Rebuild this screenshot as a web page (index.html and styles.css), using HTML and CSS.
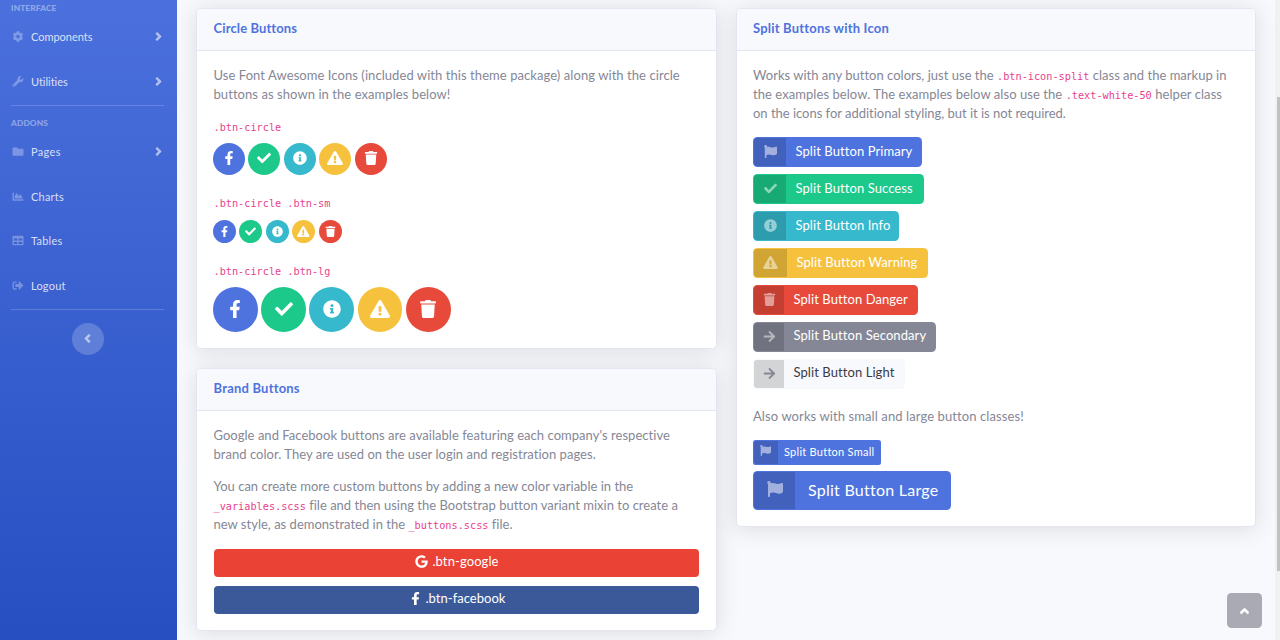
FILE: index.html
```html
<!DOCTYPE html>
<html lang="en">
<head>
<meta charset="utf-8">
<title>Buttons</title>
<link rel="stylesheet" href="styles.css">
</head>
<body>
<svg class="sprite" aria-hidden="true">
<symbol id="fb" viewBox="0 0 320 512"><path d="M279.14 288l14.22-92.66h-88.91v-60.13c0-25.35 12.42-50.06 52.24-50.06h40.42V6.26S260.43 0 225.36 0c-73.22 0-121.08 44.38-121.08 124.72v70.62H22.89V288h81.39v224h100.17V288z"/></symbol>
<symbol id="check" viewBox="0 0 512 512"><path d="M173.898 439.404l-166.4-166.4c-9.997-9.997-9.997-26.206 0-36.204l36.203-36.204c9.997-9.998 26.207-9.998 36.204 0L192 312.69 432.095 72.596c9.997-9.997 26.207-9.997 36.204 0l36.203 36.204c9.997 9.997 9.997 26.206 0 36.204l-294.4 294.401c-9.998 9.997-26.207 9.997-36.204-.001z"/></symbol>
<symbol id="info" viewBox="0 0 512 512"><path d="M256 8C119.043 8 8 119.083 8 256c0 136.997 111.043 248 248 248s248-111.003 248-248C504 119.083 392.957 8 256 8zm0 110c23.196 0 42 18.804 42 42s-18.804 42-42 42-42-18.804-42-42 18.804-42 42-42zm56 254c0 6.627-5.373 12-12 12h-88c-6.627 0-12-5.373-12-12v-24c0-6.627 5.373-12 12-12h12v-64h-12c-6.627 0-12-5.373-12-12v-24c0-6.627 5.373-12 12-12h64c6.627 0 12 5.373 12 12v100h12c6.627 0 12 5.373 12 12v24z"/></symbol>
<symbol id="warn" viewBox="0 0 576 512"><path d="M569.517 440.013C587.975 472.007 564.806 512 527.94 512H48.054c-36.937 0-59.999-40.055-41.577-71.987L246.423 23.985c18.467-32.009 64.72-31.951 83.154 0l239.94 416.028zM288 354c-25.405 0-46 20.595-46 46s20.595 46 46 46 46-20.595 46-46-20.595-46-46-46zm-43.673-165.346l7.418 136c.347 6.364 5.609 11.346 11.982 11.346h48.546c6.373 0 11.635-4.982 11.982-11.346l7.418-136c.375-6.874-5.098-12.654-11.982-12.654h-63.383c-6.884 0-12.356 5.78-11.981 12.654z"/></symbol>
<symbol id="trash" viewBox="0 0 448 512"><path d="M432 32H312l-9.4-18.7A24 24 0 0 0 281.1 0H166.8a23.72 23.72 0 0 0-21.4 13.3L136 32H16A16 16 0 0 0 0 48v32a16 16 0 0 0 16 16h416a16 16 0 0 0 16-16V48a16 16 0 0 0-16-16zM32 128l21.2 339a48 48 0 0 0 47.9 45h245.8a48 48 0 0 0 47.9-45L416 128z"/></symbol>
<symbol id="flag" viewBox="0 0 512 512"><path d="M349.565 98.783C295.978 98.783 251.721 64 184.348 64c-24.955 0-47.309 4.384-68.045 12.013a55.947 55.947 0 0 0 3.586-23.562C118.117 24.015 94.806 1.206 66.338.048 34.345-1.254 8 24.296 8 56c0 19.026 9.497 35.825 24 45.945V488c0 13.255 10.745 24 24 24h16c13.255 0 24-10.745 24-24v-94.4c28.311-12.064 63.582-22.122 114.435-22.122 53.588 0 97.844 34.783 165.217 34.783 48.169 0 86.667-16.294 122.505-40.858C506.84 359.452 512 349.571 512 339.045v-243.1c0-23.393-24.269-38.87-45.485-29.016-34.338 15.948-76.454 31.854-116.95 31.854z"/></symbol>
<symbol id="arrow" viewBox="0 0 448 512"><path d="M190.5 66.9l22.2-22.2c9.4-9.4 24.6-9.4 33.9 0L441 239c9.4 9.4 9.4 24.6 0 33.9L246.6 467.3c-9.4 9.4-24.6 9.4-33.9 0l-22.2-22.2c-9.5-9.5-9.3-25 .4-34.3L311.4 296H24c-13.3 0-24-10.7-24-24v-32c0-13.3 10.7-24 24-24h287.4L190.9 101.2c-9.8-9.3-10-24.8-.4-34.3z"/></symbol>
<symbol id="google" viewBox="0 0 488 512"><path d="M488 261.8C488 403.3 391.1 504 248 504 110.8 504 0 393.2 0 256S110.8 8 248 8c66.8 0 123 24.5 166.3 64.9l-67.5 64.9C258.5 52.6 94.3 116.6 94.3 256c0 86.5 69.1 156.6 153.7 156.6 98.2 0 135-70.4 140.8-106.9H248v-85.3h236.1c2.3 12.7 3.9 24.9 3.9 41.4z"/></symbol>
<symbol id="cog" viewBox="0 0 512 512"><path d="M487.4 315.7l-42.6-24.6c4.3-23.2 4.3-47 0-70.2l42.6-24.6c4.9-2.8 7.1-8.6 5.5-14-11.1-35.6-30-67.8-54.7-94.6-3.8-4.1-10-5.1-14.8-2.3L380.8 110c-17.9-15.4-38.5-27.3-60.8-35.1V25.8c0-5.6-3.9-10.5-9.4-11.7-36.7-8.2-74.3-7.8-109.2 0-5.5 1.2-9.4 6.1-9.4 11.7V75c-22.2 7.9-42.8 19.8-60.8 35.1L88.7 85.5c-4.9-2.8-11-1.9-14.8 2.3-24.7 26.7-43.6 58.9-54.7 94.6-1.7 5.4.6 11.2 5.5 14L67.3 221c-4.3 23.2-4.3 47 0 70.2l-42.6 24.6c-4.9 2.8-7.1 8.6-5.5 14 11.1 35.6 30 67.8 54.7 94.6 3.8 4.1 10 5.1 14.8 2.3l42.6-24.6c17.9 15.4 38.5 27.3 60.8 35.1v49.2c0 5.6 3.9 10.5 9.4 11.7 36.7 8.2 74.3 7.8 109.2 0 5.5-1.2 9.4-6.1 9.4-11.7v-49.2c22.2-7.9 42.8-19.8 60.8-35.1l42.6 24.6c4.9 2.8 11 1.9 14.8-2.3 24.7-26.7 43.6-58.9 54.7-94.6 1.5-5.5-.7-11.3-5.6-14.1zM256 336c-44.1 0-80-35.9-80-80s35.9-80 80-80 80 35.9 80 80-35.9 80-80 80z"/></symbol>
<symbol id="wrench" viewBox="0 0 512 512"><path d="M507.73 109.1c-2.24-9.03-13.54-12.09-20.12-5.51l-74.36 74.36-67.88-11.31-11.31-67.88 74.36-74.36c6.62-6.62 3.43-17.9-5.66-20.16-47.38-11.74-99.55.91-136.58 37.93-39.64 39.64-50.55 97.1-34.05 147.2L18.74 402.76c-24.99 24.99-24.99 65.51 0 90.5 24.99 24.99 65.51 24.99 90.5 0l213.21-213.21c50.12 16.71 107.47 5.68 147.37-34.22 37.07-37.07 49.7-89.32 37.91-136.73zM64 472c-13.25 0-24-10.75-24-24 0-13.26 10.75-24 24-24s24 10.74 24 24c0 13.25-10.75 24-24 24z"/></symbol>
<symbol id="folder" viewBox="0 0 512 512"><path d="M464 128H272l-64-64H48C21.49 64 0 85.49 0 112v288c0 26.51 21.49 48 48 48h416c26.51 0 48-21.49 48-48V176c0-26.51-21.49-48-48-48z"/></symbol>
<symbol id="chart" viewBox="0 0 512 512"><path d="M500 384c6.6 0 12 5.4 12 12v40c0 6.6-5.4 12-12 12H12c-6.6 0-12-5.4-12-12V76c0-6.6 5.4-12 12-12h40c6.6 0 12 5.4 12 12v308h436zM372.7 159.5L288 216l-85.3-113.7c-5.1-6.8-15.5-6.3-19.9 1L96 248v104h384l-89.9-187.8c-3.2-6.5-11.4-8.7-17.4-4.7z"/></symbol>
<symbol id="table" viewBox="0 0 512 512"><path d="M464 32H48C21.49 32 0 53.49 0 80v352c0 26.51 21.49 48 48 48h416c26.51 0 48-21.49 48-48V80c0-26.51-21.49-48-48-48zM224 416H64v-96h160v96zm0-160H64v-96h160v96zm224 160H288v-96h160v96zm0-160H288v-96h160v96z"/></symbol>
<symbol id="signout" viewBox="0 0 512 512"><path d="M497 273L329 441c-15 15-41 4.5-41-17v-96H152c-13.3 0-24-10.7-24-24v-96c0-13.3 10.7-24 24-24h136V88c0-21.4 25.9-32 41-17l168 168c9.3 9.4 9.3 24.6 0 34zM192 436v-40c0-6.6-5.4-12-12-12H96c-17.7 0-32-14.3-32-32V160c0-17.7 14.3-32 32-32h84c6.6 0 12-5.4 12-12V76c0-6.6-5.4-12-12-12H96c-53 0-96 43-96 96v192c0 53 43 96 96 96h84c6.6 0 12-5.4 12-12z"/></symbol>
<symbol id="right" viewBox="0 0 256 512"><path d="M224.3 273l-136 136c-9.4 9.4-24.6 9.4-33.9 0l-22.6-22.6c-9.4-9.4-9.4-24.6 0-33.9l96.4-96.4-96.4-96.4c-9.4-9.4-9.4-24.6 0-33.9L54.3 103c9.4-9.4 24.6-9.4 33.9 0l136 136c9.5 9.4 9.5 24.6.1 34z"/></symbol>
<symbol id="left" viewBox="0 0 256 512"><path d="M31.7 239l136-136c9.4-9.4 24.6-9.4 33.9 0l22.6 22.6c9.4 9.4 9.4 24.6 0 33.9L127.9 256l96.4 96.4c9.4 9.4 9.4 24.6 0 33.9L201.7 409c-9.4 9.4-24.6 9.4-33.9 0l-136-136c-9.5-9.4-9.5-24.6-.1-34z"/></symbol>
<symbol id="up" viewBox="0 0 320 512"><path d="M177 159.7l136 136c9.4 9.4 9.4 24.6 0 33.9l-22.6 22.6c-9.4 9.4-24.6 9.4-33.9 0L160 255.9l-96.4 96.4c-9.4 9.4-24.6 9.4-33.9 0L7 329.7c-9.4-9.4-9.4-24.6 0-33.9l136-136c9.4-9.5 24.6-9.5 34-.1z"/></symbol>
</svg>
<div class="wrapper">
<nav class="sidebar">
  <div class="heading">INTERFACE</div>
  <a class="nav-item"><svg class="nav-icon"><use href="#cog"/></svg><span class="sp-0">Components</span><svg class="caret"><use href="#right"/></svg></a>
  <a class="nav-item"><svg class="nav-icon"><use href="#wrench"/></svg><span class="sp-0">Utilities</span><svg class="caret"><use href="#right"/></svg></a>
  <hr class="divider">
  <div class="heading addons">ADDONS</div>
  <a class="nav-item"><svg class="nav-icon"><use href="#folder"/></svg><span class="sp-4">Pages</span><svg class="caret"><use href="#right"/></svg></a>
  <a class="nav-item"><svg class="nav-icon"><use href="#chart"/></svg><span class="sp-2">Charts</span></a>
  <a class="nav-item tables"><svg class="nav-icon"><use href="#table"/></svg><span class="sp-3">Tables</span></a>
  <a class="nav-item"><svg class="nav-icon"><use href="#signout"/></svg><span class="sp-2">Logout</span></a>
  <hr class="divider last">
  <button class="toggle"><svg><use href="#left"/></svg></button>
</nav>
<main class="content">
  <div class="column first">
    <section class="card">
      <h6 class="card-header sp-1">Circle Buttons</h6>
      <div class="card-body">
        <p class="intro">Use Font Awesome Icons (included with this theme package) along with the circle<br>buttons as shown in the examples below!</p>
        <div class="label"><code>.btn-circle</code></div>
        <div class="circles">
          <a class="circle primary"><svg><use href="#fb"/></svg></a><a class="circle success"><svg><use href="#check"/></svg></a><a class="circle info"><svg><use href="#info"/></svg></a><a class="circle warning"><svg class="wide"><use href="#warn"/></svg></a><a class="circle danger"><svg><use href="#trash"/></svg></a>
        </div>
        <div class="label"><code>.btn-circle .btn-sm</code></div>
        <div class="circles small">
          <a class="circle primary"><svg><use href="#fb"/></svg></a><a class="circle success"><svg><use href="#check"/></svg></a><a class="circle info"><svg><use href="#info"/></svg></a><a class="circle warning"><svg class="wide"><use href="#warn"/></svg></a><a class="circle danger"><svg><use href="#trash"/></svg></a>
        </div>
        <div class="label"><code>.btn-circle .btn-lg</code></div>
        <div class="circles large">
          <a class="circle primary"><svg><use href="#fb"/></svg></a><a class="circle success"><svg><use href="#check"/></svg></a><a class="circle info"><svg><use href="#info"/></svg></a><a class="circle warning"><svg class="wide"><use href="#warn"/></svg></a><a class="circle danger"><svg><use href="#trash"/></svg></a>
        </div>
      </div>
    </section>
    <section class="card">
      <h6 class="card-header sp-2">Brand Buttons</h6>
      <div class="card-body">
        <p class="tight">Google and Facebook buttons are available featuring each company's respective<br>brand color. They are used on the user login and registration pages.</p>
        <p class="tighter">You can create more custom buttons by adding a new color variable in the<br><code>_variables.scss</code> file and then using the Bootstrap button variant mixin to create a<br>new style, as demonstrated in the <code>_buttons.scss</code> file.</p>
        <a class="brand google"><svg><use href="#google"/></svg><span class="sp-1">.btn-google</span></a>
        <a class="brand facebook"><svg><use href="#fb"/></svg><span>.btn-facebook</span></a>
      </div>
    </section>
  </div>
  <div class="column">
    <section class="card">
      <h6 class="card-header sp-2">Split Buttons with Icon</h6>
      <div class="card-body">
        <p><span class="line-1">Works with any button colors, just use the <code>.btn-icon-split</code> class and the markup in</span><br><span class="line-2">the examples below. The examples below also use the <code>.text-white-50</code> helper class</span><br><span class="sp-0">on the icons for additional styling, but it is not required.</span></p>
        <div class="splits">
          <a class="split primary w-primary"><span class="icon"><svg><use href="#flag"/></svg></span><span class="text">Split Button Primary</span></a>
          <a class="split success w-success"><span class="icon"><svg><use href="#check"/></svg></span><span class="text">Split Button Success</span></a>
          <a class="split info w-info"><span class="icon"><svg><use href="#info"/></svg></span><span class="text">Split Button Info</span></a>
          <a class="split warning w-warning"><span class="icon i-wide"><svg><use href="#warn"/></svg></span><span class="text">Split Button Warning</span></a>
          <a class="split danger w-danger"><span class="icon i-slim"><svg><use href="#trash"/></svg></span><span class="text">Split Button Danger</span></a>
          <a class="split secondary w-secondary"><span class="icon i-slim"><svg><use href="#arrow"/></svg></span><span class="text">Split Button Secondary</span></a>
          <a class="split light w-light"><span class="icon i-slim"><svg><use href="#arrow"/></svg></span><span class="text">Split Button Light</span></a>
        </div>
        <p class="also">Also works with small and large button classes!</p>
        <div class="splits sizes">
          <a class="split primary split-sm"><span class="icon"><svg><use href="#flag"/></svg></span><span class="text">Split Button Small</span></a>
          <a class="split primary split-lg"><span class="icon"><svg><use href="#flag"/></svg></span><span class="text">Split Button Large</span></a>
        </div>
      </div>
    </section>
  </div>
</main>
</div>
<a class="scroll-top"><svg><use href="#up"/></svg></a>
<div class="scrollbar"><div class="thumb"></div></div>
</body>
</html>
```
FILE: styles.css
```css
* { box-sizing: border-box; }
html, body { height: 100%; }
body {
  margin: 0;
  overflow: hidden;
  background: #f8f9fc;
  color: #858796;
  font-family: Lato, "Noto Sans", sans-serif;
  font-size: 13px;
  line-height: 19.2px;
}
.sprite { display: none; }
svg { fill: currentColor; display: block; flex: none; }
.wrapper { display: flex; height: 640px; }

.sp-0 { letter-spacing: -0.02px; }
.sp-1 { letter-spacing: 0.1px; }
.sp-2 { letter-spacing: 0.2px; }
.sp-3 { letter-spacing: 0.25px; }
.sp-4 { letter-spacing: 0.35px; }

/* Sidebar */
.sidebar {
  position: relative;
  z-index: 1;
  width: 177px;
  flex: none;
  color: rgba(255, 255, 255, 0.8);
  background: linear-gradient(180deg, #4e73df 10%, #224abe 100%) 0 -131px / 177px 864px no-repeat;
}
.heading {
  height: 15px;
  padding-left: 11px;
  font-size: 8.3px;
  line-height: 16px;
  font-weight: 900;
  letter-spacing: 0.14px;
  color: rgba(255, 255, 255, 0.4);
}
.heading.addons { height: 24px; line-height: 35px; }
.nav-item {
  display: flex;
  align-items: center;
  height: 44.6px;
  padding: 0 15px 1px 12px;
  font-size: 11px;
}
.nav-item.tables { padding-bottom: 2px; }
.nav-icon { width: 12px; height: 11px; margin-right: 7px; color: rgba(255, 255, 255, 0.3); }
.caret { width: 7px; height: 13px; margin-left: auto; color: rgba(255, 255, 255, 0.55); stroke: currentColor; stroke-width: 20px; }
.divider { margin: 1px 13px 0 11px; border: 0; border-top: 1px solid rgba(255, 255, 255, 0.18); }
.divider.last { margin-top: 0; }
.toggle {
  display: flex;
  align-items: center;
  justify-content: center;
  width: 32px;
  height: 32px;
  margin: 13.5px 0 0 72px;
  padding: 0 1px 2px 0;
  border: 0;
  border-radius: 50%;
  background: rgba(255, 255, 255, 0.2);
  color: rgba(255, 255, 255, 0.55);
}
.toggle svg { width: 7px; height: 13px; stroke: currentColor; stroke-width: 20px; }

/* Cards */
.content {
  display: grid;
  grid-template-columns: 521px 520px;
  gap: 19px;
  align-items: start;
  padding: 8px 0 0 19px;
}
.column { display: grid; gap: 19px; }
.card {
  border: 1px solid #e3e6f0;
  border-radius: 4.5px;
  background: #fff;
  box-shadow: 0 2px 22px rgba(58, 59, 69, 0.15);
}
.card-header {
  height: 42px;
  margin: 0;
  padding: 10px 16px;
  border-bottom: 1px solid #e3e6f0;
  border-radius: 4px 4px 0 0;
  background: #f8f9fc;
  color: #4e73df;
  font-size: 13px;
  line-height: 19px;
  font-weight: 700;
}
.card-body { padding: 15px 16px 16px; }
.first .card-header { padding-left: 16.6px; }
.first .card-body { padding-left: 17px; padding-right: 17px; }
p { margin: 0 0 13.4px; letter-spacing: 0.045px; white-space: nowrap; }
.intro, .tight, .tighter { margin-left: -0.5px; }
p.intro { margin-bottom: 12.4px; letter-spacing: 0.066px; }
p.tight { margin-bottom: 13px; letter-spacing: 0.033px; }
p.tighter { margin-bottom: 15px; line-height: 19px; letter-spacing: 0.01px; }
.line-1 { letter-spacing: 0.015px; }
.line-2 { letter-spacing: 0.06px; }
code {
  color: #e83e8c;
  font-family: "DejaVu Sans Mono", monospace;
  font-size: 10.2px;
  line-height: 1;
  letter-spacing: 0.02px;
}

/* Circle buttons */
.label { height: 19.2px; margin: 0 0 6.8px -0.5px; }
.circles { display: flex; gap: 3.4px; margin: 0 0 18.6px -1px; }
.circle {
  display: flex;
  align-items: center;
  justify-content: center;
  width: 32px;
  height: 32px;
  padding-bottom: 1px;
  border-radius: 50%;
  color: #fff;
}
.circle svg { width: 14px; height: 14px; }
.circle svg.wide { width: 16px; }
.small { margin-top: 7.4px; margin-bottom: 18px; }
.small .circle { width: 23px; height: 23px; padding-bottom: 0; }
.small .circle svg { width: 11px; height: 11px; }
.small .circle svg.wide { width: 12.5px; }
.large { margin-bottom: 0; }
.large .circle { width: 44.8px; height: 44.8px; padding-bottom: 0; }
.large .circle svg { width: 18px; height: 18px; }
.large .circle svg.wide { width: 20px; }

.primary { background: #4e73df; }
.success { background: #1cc88a; }
.info { background: #36b9cc; }
.warning { background: #f6c23e; }
.danger { background: #e74a3b; }
.secondary { background: #858796; }

/* Brand buttons */
.brand {
  display: flex;
  align-items: center;
  justify-content: center;
  height: 28px;
  padding-bottom: 3px;
  border-radius: 4px;
  color: #fff;
}
.google { background: #ea4335; }
.google svg { width: 13px; height: 13px; margin: 0 4px 0 1px; }
.facebook { margin-top: 9px; background: #3b5998; }
.facebook svg { width: 9px; height: 13.5px; margin: 0 6px 0 3px; }
.facebook span { letter-spacing: 0.03px; }

/* Split buttons */
.splits { display: grid; gap: 7px; justify-items: start; }
.split {
  display: flex;
  height: 30px;
  padding: 1px;
  border-radius: 4.5px;
  color: #fff;
  overflow: hidden;
  white-space: nowrap;
}
.icon {
  display: flex;
  align-items: center;
  justify-content: center;
  width: 32px;
  flex: none;
  border-radius: 3px 0 0 3px;
  background: rgba(0, 0, 0, 0.15);
  color: rgba(255, 255, 255, 0.5);
}
.icon svg { width: 13px; height: 13px; margin-bottom: 1px; }
.icon.i-wide { width: 33px; }
.i-wide svg { width: 15px; }
.icon.i-slim { width: 30px; }
.text { padding-left: 9.5px; line-height: 27px; letter-spacing: 0.08px; }
.w-primary { width: 169px; }
.w-success { width: 171px; }
.w-info { width: 146px; }
.w-warning { width: 175px; }
.w-danger { width: 165px; }
.w-secondary { width: 183px; }
.w-secondary .text, .w-light .text { line-height: 25px; }
.i-slim svg { margin-bottom: 2px; }
.w-light { width: 152px; }
.light { background: #f8f9fc; color: #3a3b45; }
.light .icon { background: #d3d4d6; color: #858796; }
.also { margin: 18.2px 0 13.4px; letter-spacing: 0.095px; }
.sizes { gap: 6px; }
.split-sm { width: 128px; height: 25px; border-radius: 2.5px; font-size: 11px; }
.split-sm .icon { width: 24px; }
.split-sm .icon svg { width: 11px; height: 11px; margin: 0 1px 3px 0; }
.split-sm .text { padding-left: 6px; line-height: 21px; letter-spacing: 0.26px; }
.split-lg { width: 198px; height: 39px; font-size: 16px; }
.split-lg .icon { width: 41px; }
.split-lg .icon svg { width: 16px; height: 16px; margin: 0 0 3px 1px; }
.split-lg .text { padding-left: 13px; line-height: 35px; letter-spacing: 0.25px; }

/* Overlays */
.scroll-top {
  position: fixed;
  right: 18px;
  bottom: 12px;
  display: flex;
  align-items: center;
  justify-content: center;
  width: 35px;
  height: 35px;
  border-radius: 4.5px;
  background: #a9aab4;
  color: #fff;
}
.scroll-top svg { width: 9px; height: 14px; stroke: currentColor; stroke-width: 20px; }
.scrollbar {
  position: fixed;
  top: 0;
  right: 0;
  width: 5px;
  height: 640px;
  padding: 97px 0 0 2px;
  background: #f1f1f1;
}
.thumb { height: 474px; background: #c1c1c1; }
```
